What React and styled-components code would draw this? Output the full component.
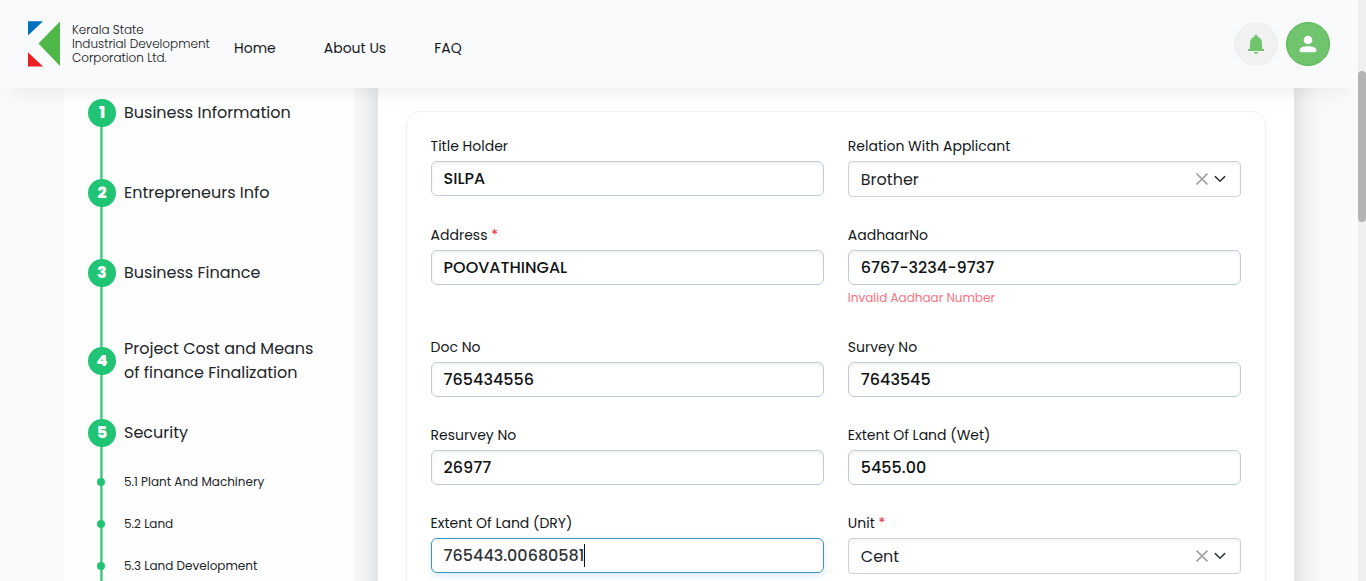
import React from "react";
import styled, { createGlobalStyle, css } from "styled-components";

const GlobalStyle = createGlobalStyle`
  *, *::before, *::after { box-sizing: border-box; }
  body {
    margin: 0;
    overflow: hidden;
    background: #f8fafc;
    color: #212529;
    font-family: Poppins, Inter, sans-serif;
  }
`;

const Window = styled.div`
  display: flex;
  height: 581px;
  overflow: hidden;
`;

const Page = styled.div`
  flex: 1;
  min-width: 0;
  display: flex;
  flex-direction: column;
`;

const ScrollTrack = styled.div`
  width: 8px;
  padding-top: 71px;
  background: #f0f0f0;
  position: relative;
  z-index: 4;
`;

const ScrollThumb = styled.div`
  height: 151px;
  border-radius: 4px;
  background: #b4b4b4;
`;

/* Header */

const Header = styled.header`
  position: relative;
  z-index: 3;
  flex: none;
  display: flex;
  align-items: center;
  height: 88px;
  padding: 0 28px;
  background: #f9fafc;
  box-shadow: 0 12px 24px -12px rgba(0, 0, 0, 0.09);
`;

const Brand = styled.div`
  display: flex;
  align-items: center;
  gap: 12px;
  width: 206px;
`;

const BrandName = styled.div`
  font-size: 12px;
  font-weight: 300;
  line-height: 14px;
  color: #111;
  white-space: pre-line;
`;

const Nav = styled.nav`
  display: flex;
  gap: 48px;
  padding-top: 8px;
  font-size: 14px;
  line-height: 20px;
  color: #16191c;
`;

const Actions = styled.div`
  display: flex;
  gap: 8px;
  margin-left: auto;
`;

const RoundButton = styled.button`
  display: flex;
  align-items: center;
  justify-content: center;
  width: 44px;
  height: 44px;
  padding: 0;
  border: 1px solid ${(p) => (p.$filled ? "#4db749" : "#f1f1f1")};
  border-radius: 50%;
  background: ${(p) => (p.$filled ? "#71c46e" : "#f1f1f1")};
`;

/* Layout under the header */

const Body = styled.main`
  flex: 1;
  display: flex;
  gap: 24px;
  padding: 0 64px;
  min-height: 0;
`;

const Sidebar = styled.aside`
  position: relative;
  z-index: 1;
  width: 290px;
  padding-left: 24px;
  background: #fefefe;
`;

const Stepper = styled.ol`
  list-style: none;
  margin: 0;
  padding: 11px 0 0;
  height: 100%;
  background: linear-gradient(90deg, #6fd8a2 1px, #2fc77c 1px 2px, #8fe0b7 2px) 12px 11px / 3px 100% no-repeat;
`;

const Step = styled.li`
  display: flex;
  align-items: center;
  gap: 8px;
  height: 28px;
  margin-bottom: ${(p) => p.$after}px;
  font-size: 16px;
  line-height: 24px;
`;

const StepBadge = styled.span`
  flex: none;
  display: flex;
  align-items: center;
  justify-content: center;
  width: 28px;
  height: 28px;
  border-radius: 50%;
  background: #21c474;
  color: #fff;
  font-size: 16px;
  font-weight: 800;
`;

const StepLabel = styled.span`
  max-width: 200px;
`;

const SubStep = styled.li`
  display: flex;
  align-items: center;
  gap: 18.6px;
  height: 42px;
  padding-left: 9.4px;
  font-size: 12px;
  line-height: 18px;
`;

const Dot = styled.span`
  width: 8px;
  height: 8px;
  border-radius: 50%;
  background: #21c474;
`;

/* The card runs on under the header and past the bottom of the window. */
const Content = styled.section`
  flex: 1;
  margin: -60px 0;
  padding: 83px 28px 0 27.6px;
  background: #fff;
  box-shadow: 0 0 30px rgba(0, 0, 0, 0.175);
`;

const FormCard = styled.form`
  display: grid;
  grid-template-columns: 1fr 1fr;
  align-items: start;
  align-content: start;
  gap: 24px;
  height: 640px;
  padding: 20px 24px;
  border: 1px solid #f1f1f2;
  border-radius: 14px;
`;

const Field = styled.div`
  display: flex;
  flex-direction: column;
`;

const Label = styled.label`
  height: 29px;
  font-size: 14px;
  line-height: 28px;
  color: #14171a;
`;

const Required = styled.span`
  color: #ec1c3c;
`;

const Box = styled.div`
  display: flex;
  align-items: center;
  padding: 0 12px;
  font-size: 16px;
  box-shadow: inset 0 3px 5px -1px rgba(0, 0, 0, 0.06);
  background: #fff;
`;

const TextBox = styled(Box)`
  height: 35px;
  border: 1px solid #bfccd8;
  border-radius: 6px;
  color: #101315;
  font-weight: 500;
  ${(p) =>
    p.$focused &&
    css`
      border-color: #3b92c9;
      color: #303438;
      box-shadow: 0 3px 7px rgba(50, 130, 240, 0.16);
    `}
`;

const Caret = styled.span`
  width: 1px;
  height: 23px;
  background: #111;
`;

const SelectBox = styled(Box)`
  height: 36px;
  border: 1px solid #cdd1da;
  border-radius: 4px;
`;

const SelectIcons = styled.span`
  display: flex;
  align-items: center;
  gap: 6px;
  margin-left: auto;
  padding-right: 2px;
`;

const ErrorText = styled.div`
  height: 24px;
  font-size: 12px;
  line-height: 26px;
  color: #f8737f;
`;

function Logo() {
  return (
    <svg width="32" height="46" viewBox="0 0 32 46">
      <path d="M0 0.3H15L0 14.5Z" fill="#0071bc" />
      <path d="M32 0.6V45L10.5 22.5Z" fill="#4fb748" />
      <path d="M0 31.2V45.6H15Z" fill="#ed1f24" />
    </svg>
  );
}

function BellIcon() {
  return (
    <svg width="16" height="20" viewBox="0 0 16 20" fill="#71c46e">
      <path d="M10 18c0 1.100-.9 2-2 2s-2-.9-2-2ZM14 15V9c0-3.100-1.650-5.640-4.500-6.320V2a1.500 1.500 0 0 0-3 0v.680C3.630 3.360 2 5.900 2 9v6H0v2h16v-2Z" />
    </svg>
  );
}

function UserIcon() {
  return (
    <svg width="18" height="18" viewBox="0 0 18 18" fill="#fff">
      <circle cx="9" cy="5" r="4.300" />
      <path d="M.5 15.600C.5 12.300 4.600 11.200 9 11.200s8.500 1.100 8.500 4.400c0 1.100-.6 1.600-1.600 1.600H2.100C1.100 17.200.5 16.700.5 15.600Z" />
    </svg>
  );
}

function ClearIcon() {
  return (
    <svg width="12" height="12" viewBox="0 0 12 12" stroke="#a3a3a6" strokeWidth="1.600" fill="none">
      <path d="M.5.5l11 11M11.500.5l-11 11" />
    </svg>
  );
}

function ChevronIcon() {
  return (
    <svg width="12" height="12" viewBox="0 0 12 12" stroke="#343a40" strokeWidth="1.600" fill="none" strokeLinecap="round" strokeLinejoin="round">
      <path d="M1.300 3.600L6 8.200l4.700-4.600" />
    </svg>
  );
}

const steps = [
  { n: 1, after: 52, label: "Business Information" },
  { n: 2, after: 52, label: "Entrepreneurs Info" },
  { n: 3, after: 60, label: "Business Finance" },
  { n: 4, after: 44, label: "Project Cost and Means of finance Finalization" },
  { n: 5, after: 14, label: "Security" },
];

const subSteps = ["5.1 Plant And Machinery", "5.2 Land", "5.3 Land Development"];

const fields = [
  { label: "Title Holder", value: "SILPA" },
  { label: "Relation With Applicant", value: "Brother", select: true },
  { label: "Address", required: true, value: "POOVATHINGAL" },
  { label: "AadhaarNo", value: "6767-3234-9737", error: "Invalid Aadhaar Number" },
  { label: "Doc No", value: "765434556" },
  { label: "Survey No", value: "7643545" },
  { label: "Resurvey No", value: "26977" },
  { label: "Extent Of Land (Wet)", value: "5455.00" },
  { label: "Extent Of Land (DRY)", value: "765443.00680581", focused: true },
  { label: "Unit", required: true, value: "Cent", select: true },
];

function FormField({ label, required, value, select, focused, error }) {
  return (
    <Field>
      <Label>
        {label}
        {required && <Required> *</Required>}
      </Label>
      {select ? (
        <SelectBox>
          {value}
          <SelectIcons>
            <ClearIcon />
            <ChevronIcon />
          </SelectIcons>
        </SelectBox>
      ) : (
        <TextBox $focused={focused}>
          {value}
          {focused && <Caret />}
        </TextBox>
      )}
      {error && <ErrorText>{error}</ErrorText>}
    </Field>
  );
}

export default function App() {
  return (
    <>
      <GlobalStyle />
      <Window>
        <Page>
          <Header>
            <Brand>
              <Logo />
              <BrandName>{"Kerala State\nIndustrial Development\nCorporation Ltd."}</BrandName>
            </Brand>
            <Nav>
              <span>Home</span>
              <span>About Us</span>
              <span>FAQ</span>
            </Nav>
            <Actions>
              <RoundButton aria-label="Notifications">
                <BellIcon />
              </RoundButton>
              <RoundButton $filled aria-label="Account">
                <UserIcon />
              </RoundButton>
            </Actions>
          </Header>
          <Body>
            <Sidebar>
              <Stepper>
                {steps.map((s) => (
                  <Step key={s.n} $after={s.after}>
                    <StepBadge>{s.n}</StepBadge>
                    <StepLabel>{s.label}</StepLabel>
                  </Step>
                ))}
                {subSteps.map((text) => (
                  <SubStep key={text}>
                    <Dot />
                    {text}
                  </SubStep>
                ))}
              </Stepper>
            </Sidebar>
            <Content>
              <FormCard>
                {fields.map((f) => (
                  <FormField key={f.label} {...f} />
                ))}
              </FormCard>
            </Content>
          </Body>
        </Page>
        <ScrollTrack>
          <ScrollThumb />
        </ScrollTrack>
      </Window>
    </>
  );
}
